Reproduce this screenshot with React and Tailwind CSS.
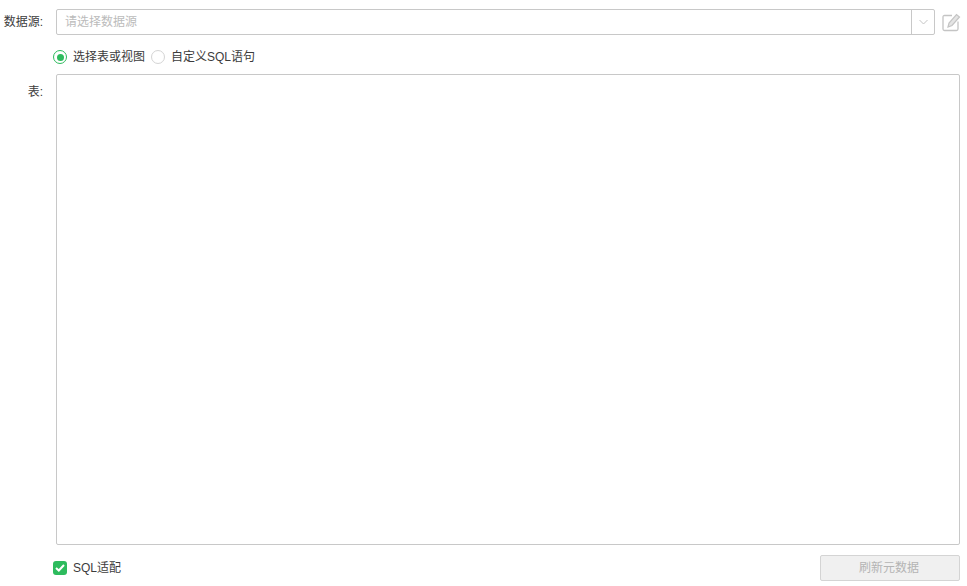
import React from "react";

export default function App() {
  return (
    <div className="w-[967px] h-[586px] bg-white text-[12px] text-[#3c3c3c] font-['Liberation_Sans','Noto_Sans_CJK_SC',sans-serif] pt-[9px] pr-[7px] overflow-hidden">
      {/* data source */}
      <div className="flex items-center h-[26px]">
        <div className="w-[43px] text-right shrink-0 leading-[26px] whitespace-nowrap">数据源:</div>
        <div className="ml-[13px] flex-1 h-[26px] flex border border-[#c8c8c8] rounded-[2px]">
          <div className="flex-1 pl-[8px] leading-[24px] text-[#bbbbbb]">请选择数据源</div>
          <div className="w-[23px] border-l border-[#c8c8c8] flex items-center justify-center">
            <svg width="9" height="6" viewBox="0 0 9 6" fill="none" stroke="#c4c4c4" strokeWidth="1">
              <path d="M0.5 1 L4.5 5 L8.5 1" />
            </svg>
          </div>
        </div>
        <div className="ml-[7px] w-[18px] h-[20px] shrink-0">
          <svg width="19" height="20" viewBox="0 0 19 20" fill="none">
            <path d="M10 3.5 H2.5 Q1 3.5 1 5 V17 Q1 18.5 2.5 18.5 H14.5 Q16 18.5 16 17 V9.5" stroke="#c4c4c4" strokeWidth="1.3" />
            <path d="M6 15 L7 11 L14.5 2.5 L17.5 5 L10 13.5 Z" stroke="#c4c4c4" strokeWidth="1.2" fill="#e4e4e4" />
          </svg>
        </div>
      </div>

      {/* mode radios */}
      <div className="flex items-center h-[14px] mt-[15px] ml-[53px]">
        <span className="w-[14px] h-[14px] rounded-full border border-[#2dbb5d] flex items-center justify-center shrink-0">
          <span className="w-[7px] h-[7px] rounded-full bg-[#2dbb5d]"></span>
        </span>
        <span className="ml-[6px] whitespace-nowrap">选择表或视图</span>
        <span className="ml-[6px] w-[14px] h-[14px] rounded-full border border-[#d4d4d4] shrink-0"></span>
        <span className="ml-[6px] whitespace-nowrap">自定义SQL语句</span>
      </div>

      {/* table list */}
      <div className="flex mt-[10px] h-[471px]">
        <div className="w-[43px] text-right shrink-0 pt-[10px] leading-[16px]">表:</div>
        <div className="ml-[13px] flex-1 border border-[#c8c8c8] rounded-[2px]"></div>
      </div>

      {/* footer */}
      <div className="flex items-center justify-between h-[26px] mt-[10px] ml-[53px]">
        <div className="flex items-center">
          <span className="w-[14px] h-[14px] rounded-[3px] bg-[#2dbb5d] flex items-center justify-center">
            <svg width="10" height="8" viewBox="0 0 10 8" fill="none" stroke="#ffffff" strokeWidth="2">
              <path d="M1 4 L3.8 6.5 L9 1" />
            </svg>
          </span>
          <span className="ml-[6px]">SQL适配</span>
        </div>
        <button className="w-[140px] h-[26px] pr-[2px] bg-[#f0f0f0] border border-[#d4d4d4] rounded-[2px] text-[#b4b4b4] text-[12px]">刷新元数据</button>
      </div>
    </div>
  );
}
